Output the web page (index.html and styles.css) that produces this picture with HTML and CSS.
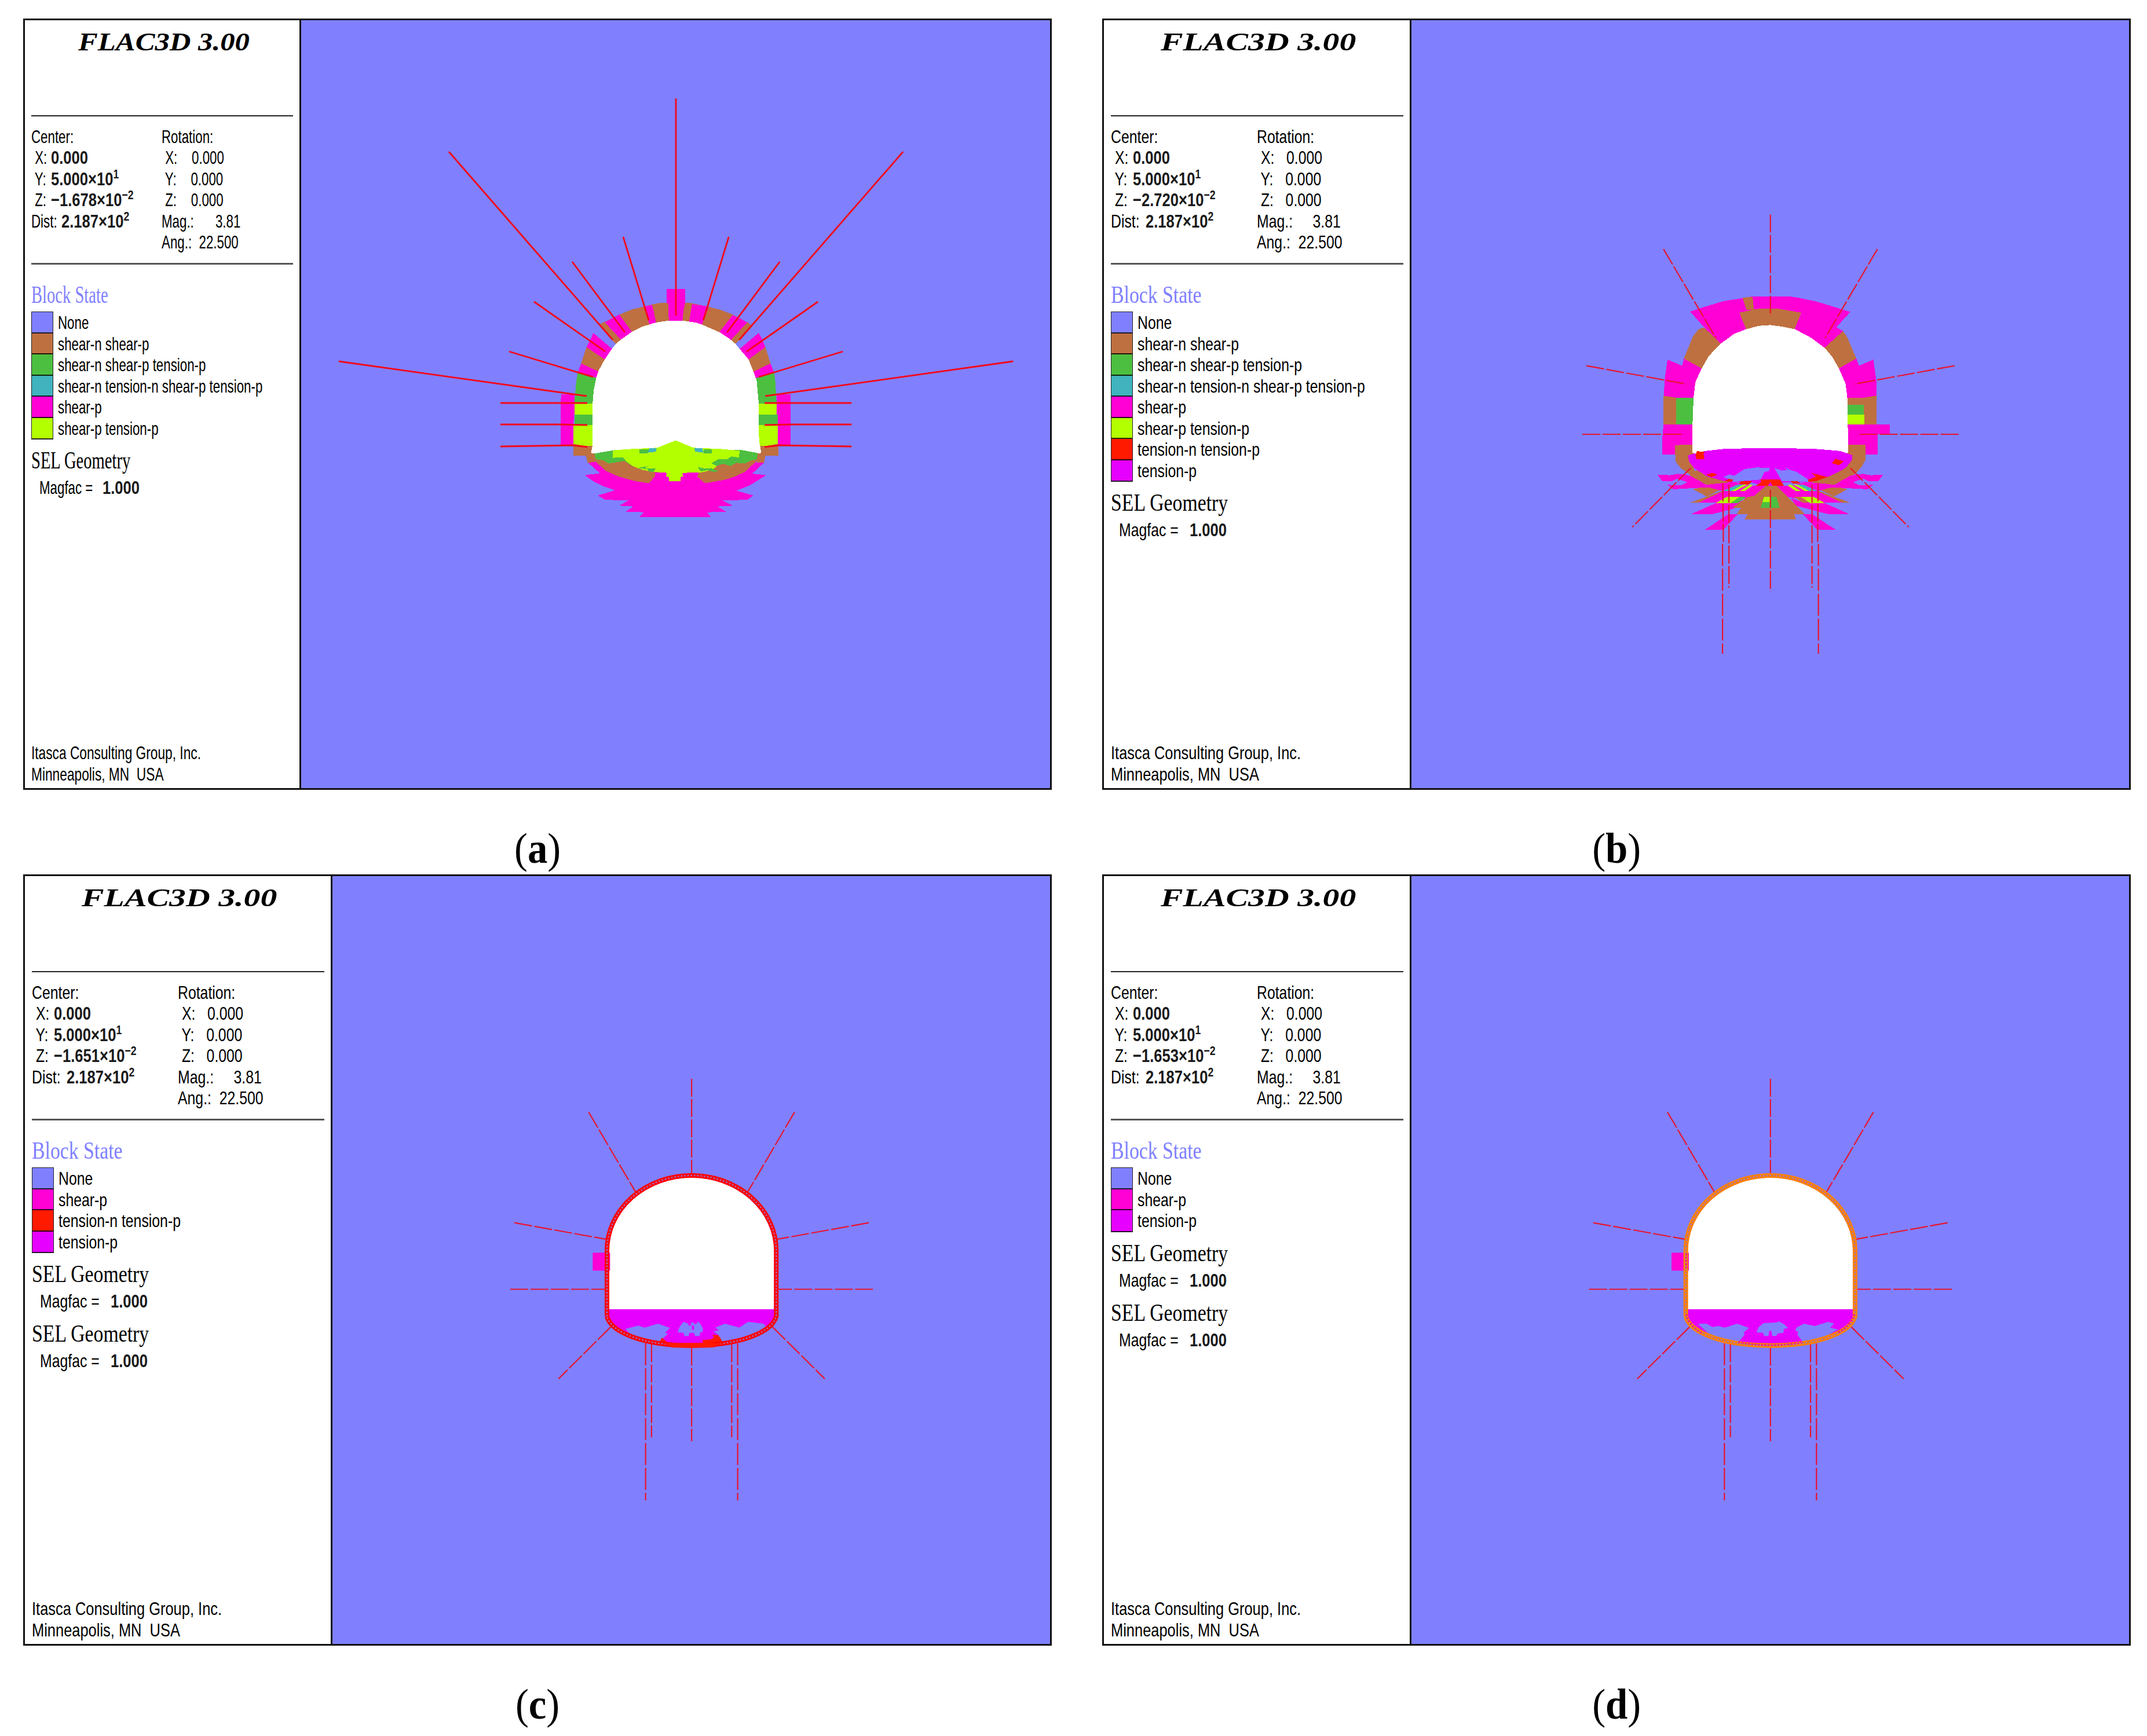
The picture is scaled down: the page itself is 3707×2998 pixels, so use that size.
FILE: index.html
```html
<!DOCTYPE html>
<html lang="en">
<head>
<meta charset="UTF-8">
<title>FLAC3D block state</title>
<link rel="stylesheet" href="styles.css">
</head>
<body>
<div class="page">

  <figure class="figure">
    <div class="panel narrow">
      <div class="side">
        <div class="title"><span>FLAC3D 3.00</span></div>
        <div class="view">
          <div class="col">
            <div class="row"><span class="t">Center:</span></div>
            <div class="row"><span class="lbl"><span class="t"> X:</span></span><b>0.000</b></div>
            <div class="row"><span class="lbl"><span class="t"> Y:</span></span><b>5.000×10<sup>1</sup></b></div>
            <div class="row"><span class="lbl"><span class="t"> Z:</span></span><b>−1.678×10<sup>−2</sup></b></div>
            <div class="row"><span class="lbl wide"><span class="t">Dist:</span></span><b>2.187×10<sup>2</sup></b></div>
          </div>
          <div class="col">
            <div class="row"><span class="t">Rotation:</span></div>
            <div class="row"><span class="t"> X:    0.000</span></div>
            <div class="row"><span class="t"> Y:    0.000</span></div>
            <div class="row"><span class="t"> Z:    0.000</span></div>
            <div class="row"><span class="t">Mag.:      3.81</span></div>
            <div class="row"><span class="t">Ang.:  22.500</span></div>
          </div>
        </div>
        <div class="head state"><span>Block State</span></div>
        <ul class="legend">
          <li><i class="none"></i><span class="t">None</span></li>
          <li><i class="brown"></i><span class="t">shear-n shear-p</span></li>
          <li><i class="green"></i><span class="t">shear-n shear-p tension-p</span></li>
          <li><i class="teal"></i><span class="t">shear-n tension-n shear-p tension-p</span></li>
          <li><i class="pink"></i><span class="t">shear-p</span></li>
          <li><i class="lime"></i><span class="t">shear-p tension-p</span></li>
        </ul>
        <div class="head"><span>SEL Geometry</span></div>
        <div class="mag"><span class="t">Magfac =</span><b>1.000</b></div>
        <div class="foot">
          <div class="row"><span class="t">Itasca Consulting Group, Inc.</span></div>
          <div class="row"><span class="t">Minneapolis, MN  USA</span></div>
        </div>
      </div>
      <svg class="plot" viewBox="520 35 1293 1326" preserveAspectRatio="none">
        <g class="blocks" transform="translate(840 460) scale(.4209 .3333)">
          <!-- crown ring -->
          <polygon class="brown" points="462,300 485,288 545,250 600,222 645,208 680,197 710,190 840,190 905,208 960,225 1010,250 1070,290 1092,310 1020,402 776,500 530,402"/>
          <path class="pink" d="M738 118H815V192L808 230 803 290H748L745 192H738zM645 208L680 200 697 300H668zM485 290L545 250 600 345 553 382zM843 195L912 208 882 310 830 295zM1010 252L1070 290 1000 385 952 345z"/>
          <path class="pink" d="M438 345L518 430 490 490 410 418 428 375zM1116 345L1036 430 1070 490 1144 418 1128 370z"/>
          <path class="brown" d="M410 418L490 487 465 552 388 503zM1144 418L1070 487 1090 552 1165 503z"/>
          <path class="pink" d="M388 503L465 548 455 580 374 552zM1165 503L1092 548 1104 580 1180 552z"/>
          <path class="green" d="M374 552L455 579 445 710V822H360V710L368 600zM1180 552L1104 579 1112 710V822H1195V768L1190 710 1185 600z"/>
          <path class="lime" d="M360 710H440V768H360zM356 822H440V930H356zM1112 710H1190V768H1112zM1112 822H1196V930H1112z"/>
          <path class="pink" d="M307 662H360V768L356 822V925H304V700zM1190 662H1247V925H1196V768H1190z"/>
          <path class="brown" d="M356 920L400 930H440V1018H415L408 982H356zM1196 920L1150 930H1112V1018H1138L1144 982H1197z"/>
          <polygon fill="#fff" points="428,967 435,930 436,700 440,640 450,578 460,540 485,482 513,430 530,402 553,378 595,340 640,312 695,291 748,281 803,281 860,292 885,302 957,342 1000,378 1022,402 1040,430 1075,482 1095,545 1108,590 1116,700 1118,900 1127,967 1040,980 525,980"/>
          <!-- invert -->
          <polygon class="pink" points="415,1015 465,1072 403,1082 440,1115 480,1140 527,1160 457,1187 487,1210 585,1212 543,1240 602,1244 570,1272 647,1274 628,1298 920,1298 905,1274 985,1272 948,1244 1012,1240 966,1212 1070,1210 1094,1187 1025,1162 1080,1135 1147,1082 1090,1074 1138,1018 900,1000"/>
          <polygon class="brown" points="410,980 440,970 1112,970 1144,980 1138,1018 1105,1012 1060,1065 1020,1088 980,1105 905,1122 892,1120 865,1090 870,1068 690,1068 692,1085 668,1122 655,1122 600,1110 540,1088 490,1060 448,1012 415,1018"/>
          <polygon class="green" points="442,970 525,952 1040,950 1112,967 1110,1000 1085,1005 1060,1022 1025,1018 1000,1035 970,1022 940,1036 900,1040 600,1036 565,1008 500,1022 480,1005 448,1000"/>
          <polygon class="lime" points="518,958 525,952 600,946 700,940 776,902 850,940 960,946 1038,955 1036,990 1005,985 985,1000 950,1000 922,1020 945,1035 925,1055 880,1068 808,1070 802,1075 808,1088 795,1092 795,1112 748,1112 748,1092 736,1088 740,1070 690,1065 640,1055 600,1035 575,1012 560,990 518,992"/>
          <path class="green" d="M627 948H670L660 970H627zM890 948H925V970H890zM620 1045L662 1035 650 1046 695 1046 685 1065 662 1062 664 1052zM865 1040L900 1048 920 1045 955 1063 930 1064 905 1056 880 1062z"/>
          <path class="teal" d="M668 942H698L695 960 662 965zM853 942H885L890 965 855 960z"/>
        </g>
        <g class="bolts solid">
          <path id="ba" d="M775 262L1058 587M988 452L1079 574M1076 409L1120 553M922 521L1045 607M879 607L1024 651M585 624L1013 684M864 696H1014M864 733H965L1014 734M864 771L990 769 1014 772"/>
          <use href="#ba" transform="translate(2334.3) scale(-1 1)"/>
          <path d="M1167 170V545"/>
        </g>
      </svg>
    </div>
    <figcaption><span>(<b>a</b>)</span></figcaption>
  </figure>

  <figure class="figure">
    <div class="panel">
      <div class="side">
        <div class="title"><span>FLAC3D 3.00</span></div>
        <div class="view">
          <div class="col">
            <div class="row"><span class="t">Center:</span></div>
            <div class="row"><span class="lbl"><span class="t"> X:</span></span><b>0.000</b></div>
            <div class="row"><span class="lbl"><span class="t"> Y:</span></span><b>5.000×10<sup>1</sup></b></div>
            <div class="row"><span class="lbl"><span class="t"> Z:</span></span><b>−2.720×10<sup>−2</sup></b></div>
            <div class="row"><span class="lbl wide"><span class="t">Dist:</span></span><b>2.187×10<sup>2</sup></b></div>
          </div>
          <div class="col">
            <div class="row"><span class="t">Rotation:</span></div>
            <div class="row"><span class="t"> X:   0.000</span></div>
            <div class="row"><span class="t"> Y:   0.000</span></div>
            <div class="row"><span class="t"> Z:   0.000</span></div>
            <div class="row"><span class="t">Mag.:     3.81</span></div>
            <div class="row"><span class="t">Ang.:  22.500</span></div>
          </div>
        </div>
        <div class="head state"><span>Block State</span></div>
        <ul class="legend">
          <li><i class="none"></i><span class="t">None</span></li>
          <li><i class="brown"></i><span class="t">shear-n shear-p</span></li>
          <li><i class="green"></i><span class="t">shear-n shear-p tension-p</span></li>
          <li><i class="teal"></i><span class="t">shear-n tension-n shear-p tension-p</span></li>
          <li><i class="pink"></i><span class="t">shear-p</span></li>
          <li><i class="lime"></i><span class="t">shear-p tension-p</span></li>
          <li><i class="red"></i><span class="t">tension-n tension-p</span></li>
          <li><i class="violet"></i><span class="t">tension-p</span></li>
        </ul>
        <div class="head"><span>SEL Geometry</span></div>
        <div class="mag"><span class="t">Magfac =</span><b>1.000</b></div>
        <div class="foot">
          <div class="row"><span class="t">Itasca Consulting Group, Inc.</span></div>
          <div class="row"><span class="t">Minneapolis, MN  USA</span></div>
        </div>
      </div>
      <svg class="plot" viewBox="2437 35 1239 1326" preserveAspectRatio="none">
        <g class="blocks" transform="translate(2700 460) scale(.4592 .3333)">
          <!-- ring -->
          <polygon class="pink" points="475,235 510,218 600,180 672,165 710,155 845,155 880,162 950,182 1078,236 1025,315 1050,335 983,430 776,450 590,410"/>
          <path class="brown" d="M672 162L710 158 715 225H687zM660 240L720 222 740 218H800L893 240 866 330 776 350 687 330z"/>
          <path class="brown" d="M495 345L508 325 528 317 592 403 550 465 522 534 452 478 485 365zM1050 335L1065 365 1100 478 1030 534 978 425z"/>
          <path class="pink" d="M390 483L445 515 452 478 522 532 500 600 492 690H375L380 580zM1100 478L1110 515 1164 483 1175 590V690H1060V610L1030 532z"/>
          <path class="brown" d="M375 670L420 680 492 683V822H375zM1060 683L1130 680 1175 670V822H1060z"/>
          <path class="green" d="M423 682H492V820H423zM1060 716H1127V768H1060z"/>
          <path class="lime" d="M1060 768H1130V820H1060z"/>
          <path class="pink" d="M375 820H490V976H371V880zM1064 820H1225V870H1180V976H1064z"/>
          <path class="brown" d="M418 927L440 925H490V1118H600L530 1130 480 1085 440 1045 420 1010zM1064 925H1135V1000L1120 1040 1095 1075 1020 1130 950 1120 1064 1010z"/>
          <polygon fill="#fff" points="484,967 484,820 488,680 495,600 518,530 545,465 588,403 640,350 687,325 735,308 776,304 820,312 868,325 930,370 983,425 1010,470 1035,530 1060,610 1066,680 1070,967 776,1000"/>
          <!-- zones under the invert -->
          <g id="wing">
            <path class="brown" d="M450 1040L620 1115 600 1150 535 1195 535 1190 485 1155 555 1135zM472 1225L535 1195 600 1160 640 1180 600 1225z"/>
            <path class="pink" d="M352 1080L400 1082 430 1075 482 1085 532 1130 640 1118 700 1137 770 1137 710 1195 590 1225H505L600 1165 545 1145 410 1155 390 1132 440 1135 465 1118 425 1100 410 1112H370z"/>
            <path class="pink" d="M480 1283L570 1228 650 1225 700 1200 680 1240 562 1283zM530 1365L620 1283H655L600 1365z"/>
            <path class="brown" d="M475 1085L500 1055 622 1116 540 1132z"/>
            <path class="teal" d="M597 1165L655 1130H690L632 1165z"/>
            <path class="lime" d="M628 1165L676 1130H692L643 1165zM663 1163L700 1130 712 1134 682 1163zM570 1228L612 1195H662L628 1226z"/>
          </g>
          <use href="#wing" transform="translate(1553) scale(-1 1)"/>
          <path class="green" d="M660 1195H685L655 1226H628z"/>
          <path class="brown" d="M893 1195L865 1195 900 1225H925zM760 1137H800L865 1225 905 1283H865L873 1310H680L692 1283H650L667 1250H635L690 1195 715 1190z"/>
          <path class="green" d="M752 1195H800L812 1252H740z"/>
          <path class="lime" d="M753 1195H778L775 1220 747 1222z"/>
          <polygon class="violet" points="468,978 530,957 600,946 715,942 835,942 960,947 1040,957 1086,978 1083,1005 1060,1045 1000,1088 930,1118 830,1118 800,1137 750,1137 700,1118 620,1118 540,1090 490,1045 470,1010"/>
          <path class="none" d="M600 1092L622 1078 642 1085 680 1050 725 1042 775 1045 770 1062 755 1065 740 1105 665 1113 640 1118 615 1100zM792 1045L820 1058 840 1055 832 1040 850 1055 872 1062 915 1100 922 1118 820 1112z"/>
          <path class="red" d="M500 958L530 960 525 975 530 997 500 1000 495 980zM1022 997L1052 1010 1035 1030 1008 1020zM535 1080L560 1070 578 1080 555 1092zM930 1070L992 1092 950 1112 918 1118 920 1105 948 1090zM740 1103H812L828 1137H785L776 1118 768 1137H722L742 1118zM668 1112H710L695 1132 658 1126zM605 1112L620 1102 640 1104 628 1118zM853 1112L880 1114 890 1126 862 1126z"/>
        </g>
        <g class="bolts" transform="translate(2700 350) scale(.4592 .5102)">
          <path id="bb" d="M375 157L572 458M85 552L462 614M70 784H452M477 898L258 1098M598 950L600 1155M621 955V1303"/>
          <path id="bbl" class="long" d="M597 1155V1527"/>
          <use href="#bb" transform="translate(1554.5) scale(-1 1)"/>
          <use href="#bbl" transform="translate(1554.5) scale(-1 1)"/>
          <path d="M777 40V384M777 972V1316"/>
        </g>
      </svg>
    </div>
    <figcaption><span>(<b>b</b>)</span></figcaption>
  </figure>

  <figure class="figure">
    <div class="panel">
      <div class="side">
        <div class="title"><span>FLAC3D 3.00</span></div>
        <div class="view">
          <div class="col">
            <div class="row"><span class="t">Center:</span></div>
            <div class="row"><span class="lbl"><span class="t"> X:</span></span><b>0.000</b></div>
            <div class="row"><span class="lbl"><span class="t"> Y:</span></span><b>5.000×10<sup>1</sup></b></div>
            <div class="row"><span class="lbl"><span class="t"> Z:</span></span><b>−1.651×10<sup>−2</sup></b></div>
            <div class="row"><span class="lbl wide"><span class="t">Dist:</span></span><b>2.187×10<sup>2</sup></b></div>
          </div>
          <div class="col">
            <div class="row"><span class="t">Rotation:</span></div>
            <div class="row"><span class="t"> X:   0.000</span></div>
            <div class="row"><span class="t"> Y:   0.000</span></div>
            <div class="row"><span class="t"> Z:   0.000</span></div>
            <div class="row"><span class="t">Mag.:     3.81</span></div>
            <div class="row"><span class="t">Ang.:  22.500</span></div>
          </div>
        </div>
        <div class="head state"><span>Block State</span></div>
        <ul class="legend">
          <li><i class="none"></i><span class="t">None</span></li>
          <li><i class="pink"></i><span class="t">shear-p</span></li>
          <li><i class="red"></i><span class="t">tension-n tension-p</span></li>
          <li><i class="violet"></i><span class="t">tension-p</span></li>
        </ul>
        <div class="head"><span>SEL Geometry</span></div>
        <div class="mag"><span class="t">Magfac =</span><b>1.000</b></div>
        <div class="head"><span>SEL Geometry</span></div>
        <div class="mag"><span class="t">Magfac =</span><b>1.000</b></div>
        <div class="foot">
          <div class="row"><span class="t">Itasca Consulting Group, Inc.</span></div>
          <div class="row"><span class="t">Minneapolis, MN  USA</span></div>
        </div>
      </div>
      <svg class="plot" viewBox="574 1513 1239 1326" preserveAspectRatio="none">
        <g class="bolts" transform="translate(860 1840) scale(.4273 .4974)">
          <g id="bc">
            <path id="bcs" d="M366 162L558 443M66 546L440 604M49 777H432M455 908L244 1088M620 968V1291"/>
            <path id="bcl" class="long" d="M596 965V1510"/>
            <use href="#bcs" transform="translate(1564) scale(-1 1)"/>
            <use href="#bcl" transform="translate(1564) scale(-1 1)"/>
            <path d="M782 46V380M782 980V1305"/>
          </g>
        </g>
        <g transform="translate(980 1980) scale(.3333)">
          <g id="bowl">
            <path fill="#fff" d="M213 850V545A428.5 384 0 0 1 1070 545V850z"/>
            <path class="violet" d="M204 843H1081V880C1060 960 900 1031 642 1031S224 960 204 880z"/>
            <path class="pink" d="M130 550H220V643H130z"/>
          </g>
          <path class="none" d="M300 945L365 928 400 938 468 918 530 940 505 965 520 970 480 1008 400 1012 340 990zM765 938L815 918 890 938 935 908 1015 918 1040 950 980 990 860 1015 800 1012 780 975 755 958 785 952zM570 962L580 935 600 908 625 918V928H640V912H655V922L668 918 675 907 685 915 700 940V960L685 965V982H660L655 965H630L628 982H605L600 965z"/>
          <path class="violet" d="M643 928H655V950H645z"/>
          <path class="red" d="M750 975L780 978 790 990 810 1025H700V1002L740 1000 760 990zM490 990L500 1000 520 1018H780L760 1040H540L470 1020z"/>
          <g class="lining">
            <path id="lining" d="M204 880V540A438.5 390 0 0 1 1081 540V880C1060 960 900 1031 642 1031S224 960 204 880"/>
            <use href="#lining" class="mesh"/>
          </g>
          <path class="red" d="M490 1018H810L740 1042H550z"/>
        </g>
      </svg>
    </div>
    <figcaption><span>(<b>c</b>)</span></figcaption>
  </figure>

  <figure class="figure">
    <div class="panel">
      <div class="side">
        <div class="title"><span>FLAC3D 3.00</span></div>
        <div class="view">
          <div class="col">
            <div class="row"><span class="t">Center:</span></div>
            <div class="row"><span class="lbl"><span class="t"> X:</span></span><b>0.000</b></div>
            <div class="row"><span class="lbl"><span class="t"> Y:</span></span><b>5.000×10<sup>1</sup></b></div>
            <div class="row"><span class="lbl"><span class="t"> Z:</span></span><b>−1.653×10<sup>−2</sup></b></div>
            <div class="row"><span class="lbl wide"><span class="t">Dist:</span></span><b>2.187×10<sup>2</sup></b></div>
          </div>
          <div class="col">
            <div class="row"><span class="t">Rotation:</span></div>
            <div class="row"><span class="t"> X:   0.000</span></div>
            <div class="row"><span class="t"> Y:   0.000</span></div>
            <div class="row"><span class="t"> Z:   0.000</span></div>
            <div class="row"><span class="t">Mag.:     3.81</span></div>
            <div class="row"><span class="t">Ang.:  22.500</span></div>
          </div>
        </div>
        <div class="head state"><span>Block State</span></div>
        <ul class="legend">
          <li><i class="none"></i><span class="t">None</span></li>
          <li><i class="pink"></i><span class="t">shear-p</span></li>
          <li><i class="violet"></i><span class="t">tension-p</span></li>
        </ul>
        <div class="head"><span>SEL Geometry</span></div>
        <div class="mag"><span class="t">Magfac =</span><b>1.000</b></div>
        <div class="head"><span>SEL Geometry</span></div>
        <div class="mag"><span class="t">Magfac =</span><b>1.000</b></div>
        <div class="foot">
          <div class="row"><span class="t">Itasca Consulting Group, Inc.</span></div>
          <div class="row"><span class="t">Minneapolis, MN  USA</span></div>
        </div>
      </div>
      <svg class="plot" viewBox="2437 1513 1239 1326" preserveAspectRatio="none">
        <g class="bolts" transform="translate(2722.7 1840) scale(.4273 .4974)">
          <use href="#bc"/>
        </g>
        <g transform="translate(2840 1980) scale(.3333)">
          <use href="#bowl" x="8"/>
          <path class="none" d="M275 918H320L350 935 380 930 415 938 478 918 540 940 510 965 518 972 490 1008 400 1008 330 970zM785 938L825 918 880 930 950 908 980 918 960 938 1000 948 900 1005 815 1008 790 975 795 960 780 955zM578 962L590 935 615 915 680 912 695 906 720 920 742 940 720 945 718 965 690 968 680 982H660L655 955H645L640 982H618L612 965z"/>
          <g class="lining orange">
            <use href="#lining" x="8"/>
            <use href="#lining" x="8" class="mesh"/>
          </g>
          <path class="speck" d="M485 1014Q650 1044 815 1014M215 870Q225 925 300 970M1085 870Q1070 925 1000 965M214 555V640"/>
        </g>
      </svg>
    </div>
    <figcaption><span>(<b>d</b>)</span></figcaption>
  </figure>

</div>
</body>
</html>
```
FILE: styles.css
```css
:root {
  --none: #8080ff;
  --brown: #bf7040;
  --green: #4dbf40;
  --teal: #40b3bf;
  --pink: #ff00d5;
  --lime: #b3ff00;
  --red: #ff1a00;
  --violet: #e600ff;
}

* { margin: 0; padding: 0; box-sizing: border-box; }

body {
  background: #fff;
  color: #000;
  font-family: "Liberation Sans", Arial, sans-serif;
}

.page {
  display: grid;
  grid-template-columns: 1776px 1776px;
  grid-auto-rows: 1478px;
  column-gap: 87px;
  padding: 32px 0 0 40px;
  height: 2998px;
  overflow: hidden;
}

.panel {
  --sx: .775;
  --head: .785;
  --title: 1.285;
  --foot: .795;
  --side: 531px;
  --pad: 12px;
  --lbl: 38px;
  --lbl-wide: 60px;
  --col: 252px;
  display: flex;
  height: 1332px;
  border: 3px solid #111;
}

.panel.narrow {
  --sx: .697;
  --head: .665;
  --title: 1.127;
  --foot: .71;
  --side: 477px;
  --pad: 11px;
  --lbl: 34px;
  --lbl-wide: 52px;
  --col: 225px;
}

/* Sidebar */
.side {
  width: var(--side);
  flex: none;
  display: flex;
  flex-direction: column;
  border-right: 3px solid #111;
  padding: 0 11px 6px var(--pad);
  font-size: 32px;
  line-height: 36.4px;
}

.t, .row b, .mag b, .head span, .title span, figcaption span {
  display: inline-block;
  white-space: pre;
  transform-origin: 0 50%;
}

.t { transform: scaleX(var(--sx)); }

.title {
  height: 166px;
  padding: 11px 0 0 86px;
  border-bottom: 2px solid #222;
  font: italic bold 45px/52px "Liberation Serif", "Times New Roman", serif;
}
.title span { transform: scaleX(var(--title)); }
.narrow .title { padding-left: 81px; }

.view {
  display: flex;
  height: 256px;
  padding-top: 17px;
  border-bottom: 3px solid #555;
}

.col:first-child { width: var(--col); }

.row {
  display: flex;
  height: 36.4px;
}

.row b, .mag b {
  color: #1a1a1a;
  transform: scaleX(.8);
}

.lbl { width: var(--lbl); }
.lbl.wide { width: var(--lbl-wide); }

sup {
  font-size: 22px;
  line-height: 0;
  vertical-align: 12px;
}

.head {
  height: 50px;
  margin-top: 11px;
  font: 43px/50px "Liberation Serif", "Times New Roman", serif;
}
.head span { transform: scaleX(var(--head)); }
.head.state { margin-top: 27px; color: var(--none); }
.mag + .head { margin-top: 12px; }

.legend {
  list-style: none;
  width: 38px;
  border: 1px solid #222;
  margin-top: 4px;
}
.legend li {
  display: flex;
  height: 36.5px;
}
.legend i {
  width: 36px;
  flex: none;
  border-bottom: 2px solid rgba(0, 0, 0, .8);
  margin-right: 9px;
}
.legend li:last-child i { border-bottom-width: 1px; }

i.none { background: var(--none); }
i.brown { background: var(--brown); }
i.green { background: var(--green); }
i.teal { background: var(--teal); }
i.pink { background: var(--pink); }
i.lime { background: var(--lime); }
i.red { background: var(--red); }
i.violet { background: var(--violet); }

.mag {
  display: flex;
  height: 37px;
  margin-top: 4px;
  padding-left: 14px;
}
.mag .t { width: 122px; }
.narrow .mag .t { width: 109px; }

.foot { margin-top: auto; }
.foot .t { transform: scaleX(var(--foot)); }

/* Plot */
.plot {
  flex: 1;
  min-width: 0;
  height: 100%;
  background: var(--none);
}

.blocks { shape-rendering: crispEdges; }

.plot .none { fill: var(--none); }
.plot .brown { fill: var(--brown); }
.plot .green { fill: var(--green); }
.plot .teal { fill: var(--teal); }
.plot .pink { fill: var(--pink); }
.plot .lime { fill: var(--lime); }
.plot .red { fill: var(--red); }
.plot .violet { fill: var(--violet); }

.bolts path {
  fill: none;
  stroke: #e8142e;
  stroke-width: 2.2px;
  stroke-dasharray: 31px 4px;
  vector-effect: non-scaling-stroke;
}
.bolts path.long { stroke-dasharray: 38px 5px; }
.bolts.solid path {
  stroke: #f5081a;
  stroke-width: 2.8px;
  stroke-dasharray: none;
}

.lining {
  fill: none;
  stroke: #ff0000;
  stroke-width: 24;
}
.lining.orange { stroke: #ff8000; }
.lining .mesh {
  stroke: #a070c0;
  stroke-width: 7;
  stroke-dasharray: 8 9;
}
.speck {
  fill: none;
  stroke: #ff00a0;
  stroke-width: 8;
  stroke-dasharray: 8 9;
}

/* Captions */
figcaption {
  text-align: center;
  padding-top: 59px;
  font: 74px/84px "Liberation Serif", "Palatino Linotype", serif;
}
figcaption span {
  transform: scaleX(.93);
  transform-origin: 50% 50%;
}
```
